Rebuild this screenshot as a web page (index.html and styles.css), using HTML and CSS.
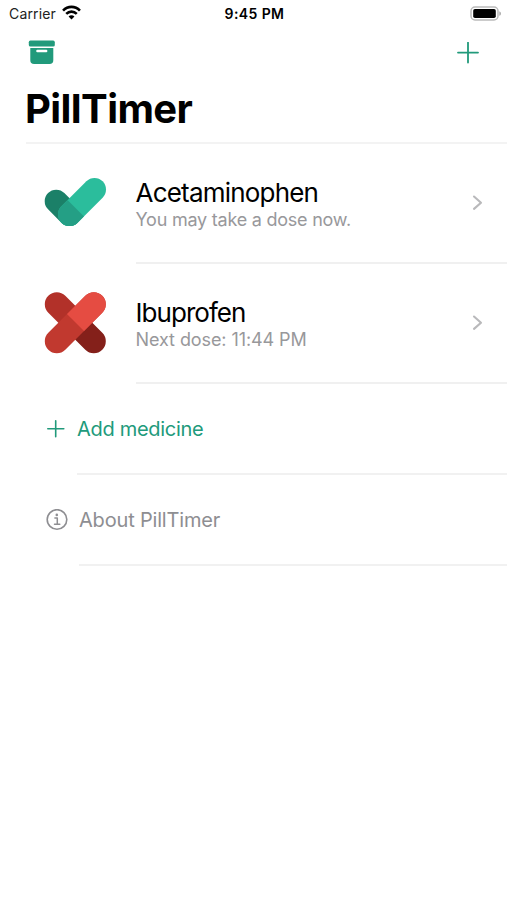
FILE: index.html
```html
<!DOCTYPE html>
<html lang="en">
<head>
<meta charset="utf-8">
<title>PillTimer</title>
<link rel="stylesheet" href="styles.css">
</head>
<body>
<header class="status">
  <div class="carrier"><span class="carrier-name">Carrier</span>
    <svg class="wifi" width="19" height="15" viewBox="0 0 18 14" fill="none" stroke="#000" stroke-width="2.5"><path d="M1 5.2C5.6.5 12.4.5 17 5.2M4 8.3c2.9-2.8 7.1-2.8 10 0"/><path d="M9 13.6 6.2 10.8c1.6-1.5 4-1.5 5.6 0z" fill="#000" stroke="none"/></svg>
  </div>
  <div class="clock">9:45 PM</div>
  <svg class="battery" width="32" height="16" viewBox="0 0 32 16"><rect x="1" y="1" width="27" height="13" rx="4" fill="#fff" stroke="#bababa" stroke-width="1.5"/><rect x="3.2" y="3" width="22.6" height="9" rx="1.8" fill="#000"/><path d="M29.3 5.2c2.2.8 2.2 3.8 0 4.6z" fill="#aaa"/></svg>
</header>
<nav class="toolbar">
  <svg width="28" height="26" viewBox="0 0 28 26" fill="#219a7b"><rect x="0.8" y="0.6" width="26" height="6" rx="1.6"/><path fill-rule="evenodd" d="M2.3 7.9h23v12.4a3.8 3.8 0 0 1-3.8 3.8H6.1a3.8 3.8 0 0 1-3.8-3.8zM9.4 9.8a1.1 1.1 0 0 0 0 2.4h8.8a1.1 1.1 0 0 0 0-2.4z"/></svg>
  <svg class="add" width="22" height="22" viewBox="0 0 22 22" stroke="#219a7b" stroke-width="1.8" stroke-linecap="round"><path d="M11 .6v20M1 10.6h20"/></svg>
</nav>
<h1 class="title"><span>PillTimer</span></h1>
<main class="list">
  <section class="medicine">
    <svg class="mark" width="64" height="64" viewBox="0.5 0.5 64 64" fill="none" stroke-width="23" stroke-linecap="round">
      <defs><clipPath id="joint"><path d="M0 5.5 60 65.5H0z"/></clipPath></defs>
      <path d="M12.7 30.7 26 44" stroke="#1b8068"/><path d="M26 44 51 19" stroke="#2bbd9c"/><path d="M26 44 51 19" stroke="#249f85" clip-path="url(#joint)"/>
    </svg>
    <div class="details"><div class="copy"><h2><span class="t-ace">Acetaminophen</span></h2><p><span class="t-now">You may take a dose now.</span></p></div>
      <svg class="chevron" width="12" height="16" viewBox="0 0 12 16" fill="none" stroke="#b9b9bb" stroke-width="2.1" stroke-linecap="round" stroke-linejoin="round"><path d="m2 1.5 7 6.2-7 6.2"/></svg></div>
  </section>
  <section class="medicine">
    <svg class="mark" width="64" height="64" viewBox="0.5 0.5 64 64" fill="none" stroke-width="24" stroke-linecap="round">
      <defs><clipPath id="upper"><path d="M1.2 1.2H64V64z"/></clipPath></defs>
      <path d="m13.3 13.7 18.5 18.5" stroke="#b23129"/><path d="m50.3 50.7-10-10" stroke="#84201a"/><path d="m13.3 50.7 37-37" stroke="#c1392f"/><path d="m13.3 50.7 37-37" stroke="#e54c42" clip-path="url(#upper)"/>
    </svg>
    <div class="details"><div class="copy"><h2><span class="t-ibu">Ibuprofen</span></h2><p><span class="t-next">Next dose: 11:44 PM</span></p></div>
      <svg class="chevron" width="12" height="16" viewBox="0 0 12 16" fill="none" stroke="#b9b9bb" stroke-width="2.1" stroke-linecap="round" stroke-linejoin="round"><path d="m2 1.5 7 6.2-7 6.2"/></svg></div>
  </section>
  <section class="action add-row">
    <svg width="18" height="18" viewBox="0 0 18 18" stroke="#219a7b" stroke-width="1.6" stroke-linecap="round"><path d="M8.7.8v16M.8 8.7h16"/></svg>
    <div class="label"><span class="t-add">Add medicine</span></div>
  </section>
  <section class="action about-row">
    <svg width="22" height="22" viewBox="0 0 22 22" fill="none" stroke="#8e8e92" stroke-width="1.6"><circle cx="11" cy="10.5" r="9.8"/><circle cx="10.8" cy="5.9" r="1.3" fill="#8e8e92" stroke="none"/><path d="M8.9 9.1h2.4v6M8.5 15.2h5.3" stroke-width="1.5" stroke-linecap="round" stroke-linejoin="round"/></svg>
    <div class="label"><span class="t-about">About PillTimer</span></div>
  </section>
</main>
</body>
</html>
```
FILE: styles.css
```css
* { box-sizing: border-box; }
body { margin: 0; height: 900px; overflow: hidden; background: #fff; color: #000; font-family: Inter, "Liberation Sans", sans-serif; }
svg { display: block; flex: none; }
h1, h2, p { margin: 0; white-space: nowrap; }
.status { display: grid; grid-template-columns: 1fr auto 1fr; align-items: center; height: 28px; padding: 0 5px 1px 9px; font-size: 14px; }
.carrier { display: flex; align-items: center; gap: 6px; color: #222; letter-spacing: 0.15px; }
.wifi { margin-top: -2px; }
.clock { margin-left: -2px; font-weight: 600; letter-spacing: 0.4px; }
.battery { justify-self: end; }
.toolbar { display: flex; align-items: center; justify-content: space-between; height: 50px; padding: 0 28px 0 28px; }
.title { height: 66px; margin-left: 26px; padding-top: 6px; border-bottom: 2px solid #f3f3f3; font-size: 40px; line-height: 50px; font-weight: 700; letter-spacing: -0.6px; text-indent: -1px; }
.medicine { display: flex; height: 120px; padding-left: 44px; }
.mark { margin: 27px 28px 0 0; }
.details { display: flex; flex: 1; justify-content: space-between; border-bottom: 2px solid #f0f0f0; }
.copy { padding-top: 33px; }
h2 { font-size: 26px; line-height: 32px; font-weight: 400; letter-spacing: -0.8px; text-indent: -0.5px; }
p { font-size: 18px; line-height: 22px; color: #98989b; text-indent: -0.5px; }
.t-now { letter-spacing: -0.23px; }
.t-next { letter-spacing: -0.08px; }
.t-ibu { letter-spacing: -0.95px; }
.chevron { margin: 51px 23px 0 0; }
.action { display: flex; height: 91px; font-size: 20px; line-height: 26px; }
.label { flex: 1; border-bottom: 2px solid #f1f1f1; padding-top: 32px; }
.add-row { padding-left: 47px; gap: 12px; color: #219a7b; }
.add-row svg { margin-top: 36px; }
.t-add { letter-spacing: -0.3px; }
.about-row { padding-left: 46px; gap: 11px; color: #8e8e92; }
.about-row svg { margin-top: 34px; }
.t-about { letter-spacing: -0.18px; }
```
